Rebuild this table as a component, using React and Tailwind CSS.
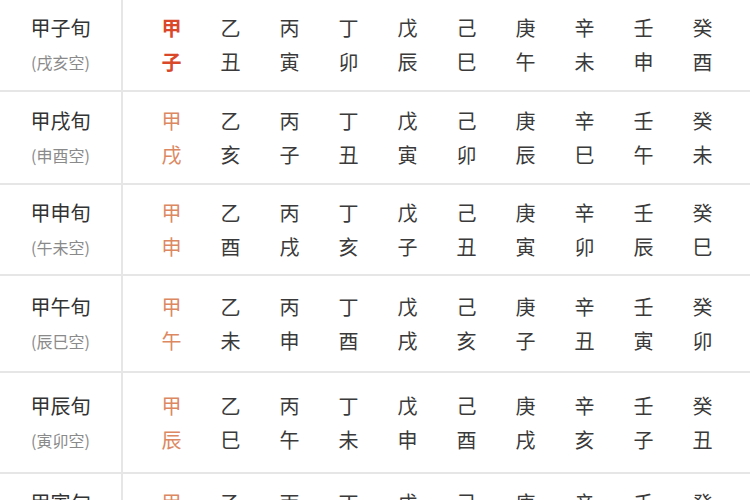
const BRANCHES = "子丑寅卯辰巳午未申酉戌亥";
const STEMS = ["甲", "乙", "丙", "丁", "戊", "己", "庚", "辛", "壬", "癸"];

const rows = [
  { name: "甲子旬", empty: "(戌亥空)", start: 0, h: "h-[92px]", bold: true },
  { name: "甲戌旬", empty: "(申酉空)", start: 10, h: "h-[93px]" },
  { name: "甲申旬", empty: "(午未空)", start: 8, h: "h-[91px]" },
  { name: "甲午旬", empty: "(辰巳空)", start: 6, h: "h-[97px]" },
  { name: "甲辰旬", empty: "(寅卯空)", start: 4, h: "h-[101px]" },
  { name: "甲寅旬", empty: "(子丑空)", start: 2, h: "h-[93px]" },
];

const XunRow = ({ row }) => (
  <div className={`flex ${row.h} border-b-2 border-[#e6e6e6]`}>
    <div className="w-[123px] shrink-0 border-r-2 border-[#e6e6e6] flex flex-col items-center justify-center leading-[34px]">
      <span className="text-[20px] text-[#333]">{row.name}</span>
      <span className="text-[16px] text-[#8a8a8a]">{row.empty}</span>
    </div>
    <div className="flex items-center pl-[19px]">
      {STEMS.map((s, i) => {
        const b = BRANCHES[(row.start + i) % 12];
        let color = "text-[#3a3a3a]";
        if (i === 0) color = row.bold ? "text-[#d9482b] font-bold" : "text-[#dc8862]";
        return (
          <div key={i} className={`w-[59px] flex flex-col items-center text-[20px] leading-[34px] ${color}`}>
            <span>{s}</span>
            <span>{b}</span>
          </div>
        );
      })}
    </div>
  </div>
);

export default function App() {
  return (
    <div
      className="w-[750px] h-[500px] overflow-hidden bg-white"
      style={{ fontFamily: '"Noto Sans CJK SC", "Noto Sans", sans-serif' }}
    >
      {rows.map((r) => (
        <XunRow key={r.name} row={r} />
      ))}
    </div>
  );
}
